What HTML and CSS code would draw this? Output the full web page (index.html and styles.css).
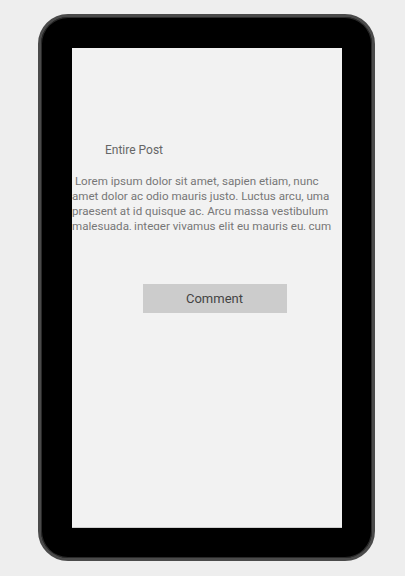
FILE: index.html
```html
<!DOCTYPE html>
<html>
<head>
<meta charset="utf-8">
<link rel="stylesheet" href="styles.css">
</head>
<body>
<div class="device">
  <div class="screen">
    <div class="title">Entire Post</div>
    <div class="post">&nbsp;Lorem ipsum dolor sit amet, sapien etiam, nunc<br>amet dolor ac odio mauris justo. Luctus arcu, uma<br>praesent at id quisque ac. Arcu massa vestibulum<br>malesuada, integer vivamus elit eu mauris eu, cum<br>sociis natoque penatibus et magnis dis parturient.</div>
    <div class="actions"><button class="comment">Comment</button></div>
  </div>
</div>
</body>
</html>
```
FILE: styles.css
```css
html, body {
  margin: 0;
  padding: 0;
  background: #eeeeee;
  font-family: Roboto, "Liberation Sans", sans-serif;
}
.device {
  margin: 14px 0 0 38px;
  width: 337px;
  height: 547px;
  box-sizing: border-box;
  background: #000;
  border: 3px solid #4a4a4a;
  border-radius: 30px;
  box-shadow: inset 0 0 0 1px #2a2a2a;
  padding: 31px 30px 30px 31px;
}
.screen {
  width: 270px;
  height: 480px;
  background: #f2f2f2;
  border-bottom: 1px solid #cfcfcf;
  box-sizing: border-box;
  padding-top: 94px;
}
.title {
  padding-left: 33px;
  font-size: 12px;
  color: #666;
  line-height: 16px;
}
.post {
  margin-top: 16px;
  font-size: 11.6px;
  line-height: 15px;
  color: #777;
  height: 56px;
  overflow: hidden;
  white-space: nowrap;
  width: 270px;
}
.actions {
  display: flex;
  justify-content: center;
  margin-top: 54px;
  padding-left: 15px;
}
.comment {
  width: 144px;
  height: 29px;
  border: none;
  background: #cccccc;
  color: #444;
  font-family: Roboto, "Liberation Sans", sans-serif;
  font-size: 13px;
  padding: 0;
}
```
